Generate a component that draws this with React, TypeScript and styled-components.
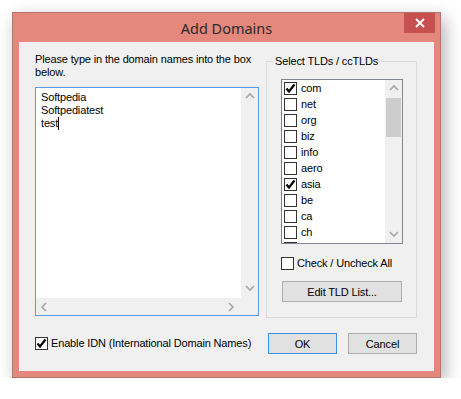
import React from 'react';
import styled, { createGlobalStyle } from 'styled-components';

const GlobalStyle = createGlobalStyle`
  body {
    margin: 0;
    background: #fff;
    font-family: "Liberation Sans", Arial, sans-serif;
    font-size: 11px;
    letter-spacing: -0.15px;
    color: #000;
  }
`;

const tlds = [
  { name: 'com', checked: true },
  { name: 'net', checked: false },
  { name: 'org', checked: false },
  { name: 'biz', checked: false },
  { name: 'info', checked: false },
  { name: 'aero', checked: false },
  { name: 'asia', checked: true },
  { name: 'be', checked: false },
  { name: 'ca', checked: false },
  { name: 'ch', checked: false },
  { name: 'cn', checked: false },
];

const Check = ({ checked }: { checked: boolean }) => (
  <CheckBox>
    {checked && (
      <svg width="11" height="11" viewBox="0 0 11 11">
        <polyline points="1.5,5.5 4,8.5 9.5,1.5" fill="none" stroke="#000" strokeWidth="2.2" />
      </svg>
    )}
  </CheckBox>
);

const Chevron = ({ dir }: { dir: 'up' | 'down' | 'left' | 'right' }) => {
  const pts = {
    up: '1,6 5,2 9,6',
    down: '1,2 5,6 9,2',
    left: '6,1 2,5 6,9',
    right: '2,1 6,5 2,9',
  }[dir];
  return (
    <svg width="10" height="10" viewBox="0 0 10 10">
      <polyline points={pts} fill="none" stroke="#a6a6a6" strokeWidth="1.6" />
    </svg>
  );
};

const App = () => {
  return (
    <Page>
      <GlobalStyle />
      <Window>
        <TitleBar>
          <span />
          <Title>Add Domains</Title>
          <CloseButton>
            <svg width="10" height="10" viewBox="0 0 10 10">
              <path d="M1 1 L9 9 M9 1 L1 9" stroke="#fff" strokeWidth="1.8" />
            </svg>
          </CloseButton>
        </TitleBar>
        <Client>
          <MainRow>
            <LeftCol>
              <Label>Please type in the domain names into the box below.</Label>
              <EditBox>
                <EditText>
                  Softpedia
                  <br />
                  Softpediatest
                  <br />
                  test<Caret />
                </EditText>
                <VScroll>
                  <Chevron dir="up" />
                  <Chevron dir="down" />
                </VScroll>
                <HScroll>
                  <Chevron dir="left" />
                  <Chevron dir="right" />
                </HScroll>
                <Corner />
              </EditBox>
            </LeftCol>
            <Group>
              <GroupHead>
                <span>Select TLDs / ccTLDs</span>
              </GroupHead>
              <GroupBody>
                <ListBox>
                  <Items>
                    {tlds.map((t) => (
                      <Item key={t.name}>
                        <Check checked={t.checked} />
                        <span>{t.name}</span>
                      </Item>
                    ))}
                  </Items>
                  <ListScroll>
                    <ArrowCell>
                      <Chevron dir="up" />
                    </ArrowCell>
                    <Thumb />
                    <Track />
                    <ArrowCell>
                      <Chevron dir="down" />
                    </ArrowCell>
                  </ListScroll>
                </ListBox>
                <CheckRow>
                  <Check checked={false} />
                  <span>Check / Uncheck All</span>
                </CheckRow>
                <Button $width={120}>Edit TLD List...</Button>
              </GroupBody>
            </Group>
          </MainRow>
          <BottomRow>
            <CheckRow>
              <Check checked />
              <span>Enable IDN (International Domain Names)</span>
            </CheckRow>
            <Buttons>
              <Button $width={69} $default>OK</Button>
              <Button $width={69}>Cancel</Button>
            </Buttons>
          </BottomRow>
        </Client>
      </Window>
    </Page>
  );
};

const Page = styled.div`
  padding: 12px 0 0 12px;
`;

const Window = styled.div`
  box-sizing: border-box;
  width: 429px;
  border: 1px solid #b5746c;
  background: #e4887d;
  padding: 0 6px 6px;
  display: flex;
  flex-direction: column;
  box-shadow: 4px 6px 16px rgba(0, 0, 0, 0.3);
`;

const TitleBar = styled.div`
  height: 29px;
  display: grid;
  grid-template-columns: 1fr auto 1fr;
  align-items: start;
`;

const Title = styled.div`
  font-family: "Noto Sans", "Liberation Sans", sans-serif;
  font-size: 14.5px;
  letter-spacing: 0;
  line-height: 30px;
  color: #2a2a2a;
`;

const CloseButton = styled.div`
  justify-self: end;
  margin-right: -1px;
  width: 31px;
  height: 20px;
  background: #c75050;
  display: flex;
  align-items: center;
  justify-content: center;
`;

const Client = styled.div`
  box-sizing: border-box;
  height: 329px;
  background: #f0f0f0;
  padding: 11px 17px 0 16px;
  display: flex;
  flex-direction: column;
`;

const MainRow = styled.div`
  display: flex;
  gap: 7px;
  align-items: flex-start;
`;

const LeftCol = styled.div`
  width: 224px;
  display: flex;
  flex-direction: column;
`;

const Label = styled.div`
  line-height: 13px;
  width: 232px;
`;

const EditBox = styled.div`
  margin-top: 8px;
  box-sizing: border-box;
  height: 229px;
  border: 1px solid #569de5;
  background: #fff;
  display: grid;
  grid-template-columns: 1fr 17px;
  grid-template-rows: 1fr 17px;
`;

const EditText = styled.div`
  padding: 3px 5px;
  line-height: 13px;
`;

const Caret = styled.span`
  display: inline-block;
  width: 1px;
  height: 13px;
  background: #000;
  vertical-align: -3px;
`;

const VScroll = styled.div`
  background: #f0f0f0;
  display: flex;
  flex-direction: column;
  justify-content: space-between;
  align-items: center;
  padding: 4px 0;
`;

const HScroll = styled.div`
  background: #f0f0f0;
  display: flex;
  justify-content: space-between;
  align-items: center;
  padding: 0 4px;
`;

const Corner = styled.div`
  background: #f0f0f0;
`;

const Group = styled.div`
  margin-top: 2px;
  width: 151px;
  display: flex;
  flex-direction: column;
`;

const GroupHead = styled.div`
  display: flex;
  height: 13px;
  line-height: 13px;

  &::before,
  &::after {
    content: '';
    box-sizing: border-box;
    align-self: flex-end;
    height: 7px;
    border-top: 1px solid #dcdcdc;
  }
  &::before {
    width: 8px;
    border-left: 1px solid #dcdcdc;
  }
  &::after {
    flex: 1;
    border-right: 1px solid #dcdcdc;
  }
  span {
    padding: 0 2px 0 1px;
    white-space: nowrap;
  }
`;

const GroupBody = styled.div`
  box-sizing: border-box;
  height: 250px;
  padding: 0 13px 0 14px;
  border: 1px solid #dcdcdc;
  border-top: none;
`;

const ListBox = styled.div`
  margin-top: 11px;
  box-sizing: border-box;
  width: 122px;
  height: 165px;
  border: 1px solid #828790;
  background: #fff;
  display: grid;
  grid-template-columns: 1fr 17px;
  overflow: hidden;
`;

const Items = styled.div`
  overflow: hidden;
`;

const Item = styled.div`
  height: 16px;
  display: flex;
  align-items: center;
  gap: 4px;
  padding-left: 2px;
  color: #000;
`;

const CheckBox = styled.span`
  box-sizing: border-box;
  width: 13px;
  height: 13px;
  border: 1px solid #333;
  background: #fff;
  display: inline-flex;
  align-items: center;
  justify-content: center;
  flex: none;
`;

const ListScroll = styled.div`
  background: #f0f0f0;
  display: flex;
  flex-direction: column;
`;

const ArrowCell = styled.div`
  height: 17px;
  display: flex;
  align-items: center;
  justify-content: center;
`;

const Thumb = styled.div`
  margin: 1px 1px 0;
  height: 39px;
  background: #cdcdcd;
`;

const Track = styled.div`
  flex: 1;
`;

const CheckRow = styled.div`
  display: flex;
  align-items: center;
  gap: 3px;
  margin-top: 13px;
  line-height: 13px;
`;

const Button = styled.div<{ $width: number; $default?: boolean }>`
  box-sizing: border-box;
  width: ${(p) => p.$width}px;
  height: 21px;
  margin-top: 11px;
  margin-left: 1px;
  border: 1px solid ${(p) => (p.$default ? '#3c8fe0' : '#adadad')};
  background: #e1e1e1;
  display: flex;
  align-items: center;
  justify-content: center;
`;

const BottomRow = styled.div`
  margin-top: 15px;
  display: flex;
  justify-content: space-between;
  align-items: center;

  ${CheckRow} {
    margin-top: 0;
  }
  ${Button} {
    margin: 0;
  }
`;

const Buttons = styled.div`
  display: flex;
  gap: 11px;
`;

export default App;
